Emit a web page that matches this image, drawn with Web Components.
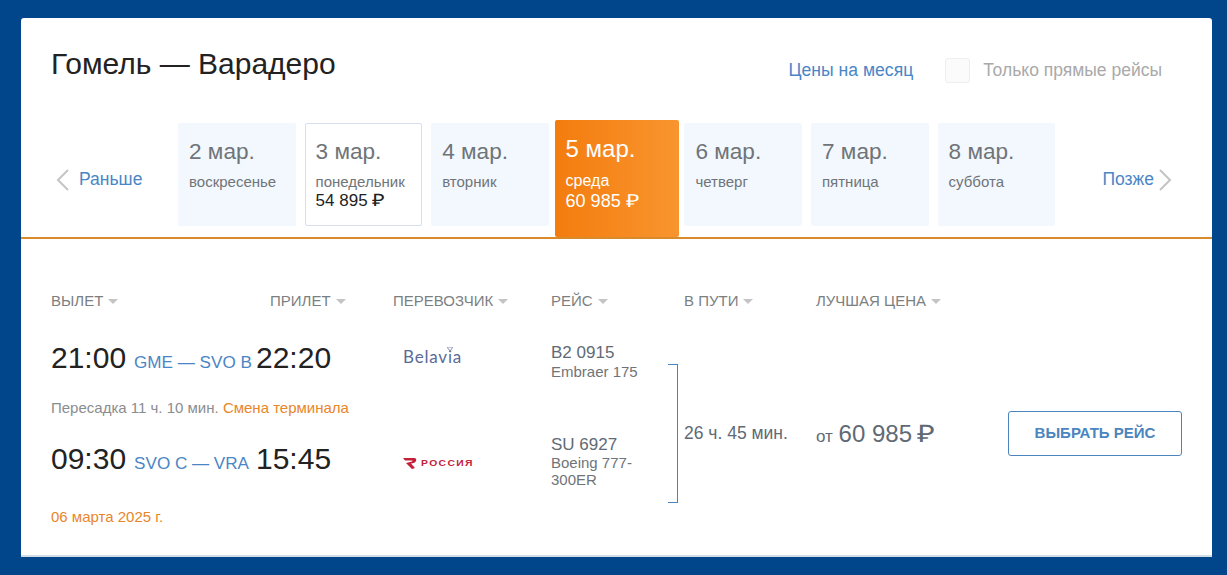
<!DOCTYPE html>
<html lang="ru">
<head>
<meta charset="utf-8">
<title>Гомель — Варадеро</title>
<style>
    html, body { margin: 0; height: 575px; overflow: hidden; background: #01468b; }
    body { font-family: "Liberation Sans", Arial, sans-serif; }
</style>
</head>
<body>
<flight-card>
    <search-head slot="head" title-text="Гомель — Варадеро"></search-head>
    <date-strip slot="dates">
        <date-tab date="2 мар." day="воскресенье"></date-tab>
        <date-tab date="3 мар." day="понедельник" price="54 895" variant="priced"></date-tab>
        <date-tab date="4 мар." day="вторник"></date-tab>
        <date-tab date="5 мар." day="среда" price="60 985" variant="active"></date-tab>
        <date-tab date="6 мар." day="четверг"></date-tab>
        <date-tab date="7 мар." day="пятница"></date-tab>
        <date-tab date="8 мар." day="суббота"></date-tab>
    </date-strip>
    <sort-bar slot="sort"></sort-bar>
    <offer-row slot="offer" duration="26 ч. 45 мин." price="60 985">
        <flight-leg style="--leg-h: 61px; --num-top: 4.5px; --plane-top: 0px; --logo-top: 7px" dep="21:00" route="GME — SVO B" arr="22:20" number="B2 0915" plane="Embraer 175">
            <airline-logo name="belavia"></airline-logo>
        </flight-leg>
        <leg-note slot="note" style="margin-bottom: 22px"><span>Пересадка 11 ч. 10 мин.</span>&nbsp;<b>Смена терминала</b></leg-note>
        <flight-leg slot="second" style="--leg-h: 69px; --num-top: -4.5px; --plane-top: -1px; --logo-top: 4px" dep="09:30" route="SVO C — VRA" arr="15:45" number="SU 6927" plane="Boeing 777-300ER">
            <airline-logo name="rossiya"></airline-logo>
        </flight-leg>
        <leg-note slot="date"><b>06 марта 2025 г.</b></leg-note>
    </offer-row>
</flight-card>

<script>
    const chevron = (d) => `<svg width="15" height="22" viewBox="0 0 15 22" fill="none" stroke="#c4c4c4" stroke-width="2"><path d="${d}"/></svg>`;
    const ruble = '<span style="display:inline-block;transform:scaleX(1.28);transform-origin:left">₽</span>';

    class FlightCard extends HTMLElement {
        connectedCallback() {
            this.attachShadow({ mode: 'open' }).innerHTML = `
                <style>
                    :host { display: block; box-sizing: border-box; margin: 18px 15px 0 21px; height: 539px; background: #fff; border-radius: 3px 3px 0 0; border-bottom: 2px solid #d3dde6; }
                </style>
                <slot name="head"></slot>
                <slot name="dates"></slot>
                <slot name="sort"></slot>
                <slot name="offer"></slot>`;
        }
    }

    class SearchHead extends HTMLElement {
        connectedCallback() {
            this.attachShadow({ mode: 'open' }).innerHTML = `
                <style>
                    :host { display: flex; align-items: center; height: 102px; padding: 0 50px 0 30px; box-sizing: border-box; }
                    h1 { flex: 1; margin: -10px 0 0; font-size: 30px; font-weight: 400; color: #222; }
                    a, i, span { margin-top: 2px; }
                    a { font-size: 17.6px; color: #4a86c5; }
                    i { width: 25px; height: 25px; margin-left: 32px; margin-right: 13px; box-sizing: border-box; background: #fbfbfb; border: 1px solid #eee; border-radius: 3px; }
                    span { font-size: 17.5px; color: #a9a9a9; }
                </style>
                <h1>${this.getAttribute('title-text')}</h1>
                <a>Цены на месяц</a><i></i><span>Только прямые рейсы</span>`;
        }
    }

    class DateStrip extends HTMLElement {
        connectedCallback() {
            this.attachShadow({ mode: 'open' }).innerHTML = `
                <style>
                    :host { display: flex; height: 119px; box-sizing: border-box; padding: 0 39px 0 30px; border-bottom: 2px solid #d98a2b; font-size: 17.5px; }
                    .side { display: flex; align-items: center; gap: 8px; height: 117px; color: #4a86c5; margin-top: 1px; }
                    .early { width: 127px; padding-left: 4px; gap: 9px; box-sizing: border-box; }
                    .late { margin-left: auto; gap: 4px; }
                    .tabs { display: flex; gap: 9px; }
                </style>
                <div class="side early">${chevron('M13 1 L3 11 L13 21')}<span>Раньше</span></div>
                <div class="tabs"><slot></slot></div>
                <div class="side late"><span>Позже</span>${chevron('M2 1 L12 11 L2 21')}</div>`;
        }
    }

    class DateTab extends HTMLElement {
        connectedCallback() {
            const price = this.getAttribute('price');
            this.attachShadow({ mode: 'open' }).innerHTML = `
                <style>
                    :host { display: block; box-sizing: border-box; width: 117.6px; height: 103px; margin-top: 3px; padding: 15px 11px 0; background: #f3f8fe; border-radius: 2px; color: #6f7478; }
                    :host([variant="priced"]) { background: #fff; border: 1px solid #d5dff0; padding: 14px 10px 0; }
                    :host([variant="active"]) { width: 124px; height: 117px; margin: 0 -3.2px; padding: 15px 11px 0; background: linear-gradient(90deg, #f47c0e, #f8952f); color: #fff; }
                    .date { font-size: 22.6px; line-height: 28px; }
                    :host([variant="active"]) .date { font-size: 24px; }
                    .day { font-size: 15px; line-height: 18px; margin-top: 7px; }
                    :host([variant="active"]) .day { font-size: 16px; margin-top: 9px; }
                    .price { font-size: 17px; line-height: 20px; color: #222; }
                    :host([variant="active"]) .price { color: #fff; font-size: 18px; margin-top: 1px; }
                </style>
                <div class="date">${this.getAttribute('date')}</div>
                <div class="day">${this.getAttribute('day')}</div>
                ${price ? `<div class="price">${price} ${ruble}</div>` : ''}`;
        }
    }

    class SortBar extends HTMLElement {
        connectedCallback() {
            const cols = [['Вылет', 219], ['Прилет', 123], ['Перевозчик', 158], ['Рейс', 133], ['В пути', 132], ['Лучшая цена', 0]];
            this.attachShadow({ mode: 'open' }).innerHTML = `
                <style>
                    :host { display: flex; padding: 52px 0 0 30px; height: 20px; font-size: 15px; line-height: 20px; color: #7c7f82; text-transform: uppercase; }
                    span { display: flex; align-items: center; gap: 5px; flex: none; }
                    i { width: 0; height: 0; border: 5px solid transparent; border-top-color: #c4c4c4; border-bottom-width: 0; }
                </style>
                ${cols.map(([t, w]) => `<span style="${w ? `width:${w}px` : ''}">${t}<i></i></span>`).join('')}`;
        }
    }

    class OfferRow extends HTMLElement {
        connectedCallback() {
            this.attachShadow({ mode: 'open' }).innerHTML = `
                <style>
                    :host { display: flex; align-items: center; padding: 27px 30px 0 30px; color: #5f6a75; }
                    .legs { width: 617px; flex: none; padding-bottom: 2px; }
                    .bracket { width: 10px; height: 139px; flex: none; box-sizing: border-box; border: 1px solid #4a85c0; border-left: 0; }
                    .time { width: 132px; margin-left: 6px; font-size: 17.5px; flex: none; }
                    .price { flex: 1; font-size: 17px; margin-top: -2px; }
                    .price b { font-size: 24px; font-weight: 400; margin-left: 1px; }
                    .price span { margin-left: -2px; }
                    button { width: 174px; height: 45px; margin-top: 1px; padding: 0 0 2px; background: #fff; border: 1px solid #4a85c0; border-radius: 3px; font: bold 15px "Liberation Sans", Arial, sans-serif; color: #4a85c0; text-transform: uppercase; }
                </style>
                <div class="legs">
                    <slot></slot>
                    <slot name="note"></slot>
                    <slot name="second"></slot>
                    <slot name="date"></slot>
                </div>
                <div class="bracket"></div>
                <div class="time">${this.getAttribute('duration')}</div>
                <div class="price">от <b>${this.getAttribute('price')} ${ruble}</b></div>
                <button>Выбрать рейс</button>`;
        }
    }

    class FlightLeg extends HTMLElement {
        connectedCallback() {
            this.attachShadow({ mode: 'open' }).innerHTML = `
                <style>
                    :host { display: grid; grid-template-columns: 205px 75px 62px 158px 117px; height: var(--leg-h); align-items: start; }
                    .t { font-size: 30px; line-height: 40px; color: #222; white-space: nowrap; }
                    .r { font-size: 17.1px; color: #4a86c5; margin-left: 8px; }
                    .n { font-size: 17px; line-height: 20px; color: #5f6a75; margin-top: var(--num-top); }
                    .p { font-size: 15px; line-height: 17px; color: #6f7478; margin-top: var(--plane-top); }
                    .logo { padding: var(--logo-top) 0 0 10px; }
                </style>
                <div class="t">${this.getAttribute('dep')}<span class="r">${this.getAttribute('route')}</span></div>
                <div class="t">${this.getAttribute('arr')}</div>
                <div></div>
                <div class="logo"><slot></slot></div>
                <div><div class="n">${this.getAttribute('number')}</div><div class="p">${this.getAttribute('plane')}</div></div>`;
        }
    }

    class LegNote extends HTMLElement {
        connectedCallback() {
            this.attachShadow({ mode: 'open' }).innerHTML = `
                <style>
                    :host { display: block; font-size: 15px; line-height: 18px; color: #8a8d90; }
                    ::slotted(b) { font-weight: 400; color: #e8862a; }
                </style>
                <slot></slot>`;
        }
    }

    class AirlineLogo extends HTMLElement {
        connectedCallback() {
            const belavia = this.getAttribute('name') === 'belavia';
            this.attachShadow({ mode: 'open' }).innerHTML = belavia ? `
                <style>
                    :host { display: block; position: relative; font: 400 17px/24px Lato, sans-serif; color: #5a6b98; letter-spacing: .8px; }
                    svg { position: absolute; left: 44px; top: 2px; }
                </style>
                Belavia<svg width="6" height="5" viewBox="0 0 6 5" fill="none" stroke="#8a94b0" stroke-width="1"><path d="M0 0 L3 4 L6 0 M1 0 H5"/></svg>` : `
                <style>
                    :host { display: flex; align-items: center; gap: 4px; height: 24px; margin-top: 8px; font: bold 9px "Liberation Sans", Arial, sans-serif; color: #c4203a; letter-spacing: 1.2px; }
                    span { transform: scaleX(1.15); transform-origin: left; }
                </style>
                <svg width="14" height="11" viewBox="0 0 14 11" fill="#c4203a"><path d="M0 0 H11 Q14 0 13 3 Q12 5 8 5.5 L12 10 L9 11 L3 5 L9 3.5 Q10 3 9 2.5 H2 Z"/></svg><span>РОССИЯ</span>`;
        }
    }

    customElements.define('flight-card', FlightCard);
    customElements.define('search-head', SearchHead);
    customElements.define('date-strip', DateStrip);
    customElements.define('date-tab', DateTab);
    customElements.define('sort-bar', SortBar);
    customElements.define('offer-row', OfferRow);
    customElements.define('flight-leg', FlightLeg);
    customElements.define('leg-note', LegNote);
    customElements.define('airline-logo', AirlineLogo);
</script>
</body>
</html>
